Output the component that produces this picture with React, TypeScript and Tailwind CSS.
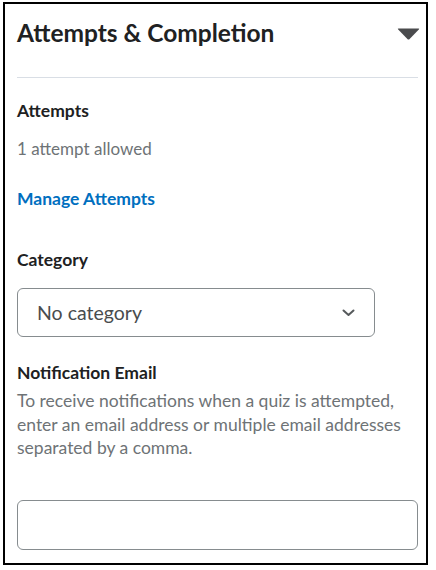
import { useState } from "react";

const App = () => {
  const [email, setEmail] = useState<string>("");

  return (
    <div className="bg-white w-[436px] h-[570px] pt-[2px] pl-[3px]" style={{ fontFamily: "Lato, 'Open Sans', sans-serif" }}>
      <div className="w-[425px] h-[563px] border-2 border-black pl-[12px] pr-[8px] pt-[13px]">
        <div className="flex flex-row items-center justify-between h-[32px]">
          <h2 className="text-[24.5px] leading-[32px] font-bold text-[#202122]">Attempts &amp; Completion</h2>
          <svg width="23" height="12" viewBox="0 0 23 12" className="mr-[-2px] mt-[2px]">
            <path d="M1.5 0.5 H21.5 Q22.8 0.5 21.8 1.6 L12.6 11 Q11.5 12 10.4 11 L1.2 1.6 Q0.2 0.5 1.5 0.5 Z" fill="#4a4b4d" />
          </svg>
        </div>
        <div className="mt-[28px] h-px bg-[#d9dee5]" />

        <div className="mt-[22px] text-[17.5px] leading-[22px] font-bold text-[#202122]">Attempts</div>
        <div className="mt-[16px] text-[17px] leading-[22px] text-[#6e7376]">1 attempt allowed</div>
        <button className="block mt-[28px] text-[17.5px] leading-[22px] font-bold text-[#006fbf]">Manage Attempts</button>

        <div className="mt-[39px] text-[17.5px] leading-[22px] font-bold text-[#202122]">Category</div>
        <div className="mt-[17px] w-[358px] h-[49px] border border-[#868c8f] rounded-[6px] flex flex-row items-center justify-between pl-[19px] pr-[19px]">
          <span className="text-[19.5px] leading-[24px] text-[#494c4e]">No category</span>
          <svg width="13" height="8" viewBox="0 0 13 8">
            <path d="M1.5 1.5 L6.5 6 L11.5 1.5" fill="none" stroke="#565a5c" strokeWidth="2" strokeLinecap="round" strokeLinejoin="round" />
          </svg>
        </div>

        <div className="mt-[25px] text-[17.5px] leading-[22px] font-bold text-[#202122]">Notification Email</div>
        <p className="mt-[5px] text-[17.5px] leading-[23.5px] text-[#6e7376]">
          To receive notifications when a quiz is attempted, enter an email address or multiple email addresses separated by a comma.
        </p>
        <input
          value={email}
          onChange={(e) => setEmail(e.target.value)}
          className="block mt-[40px] w-full h-[50px] border border-[#868c8f] rounded-[6px] px-3 text-[17px] outline-none"
        />
      </div>
    </div>
  );
};

export default App;
